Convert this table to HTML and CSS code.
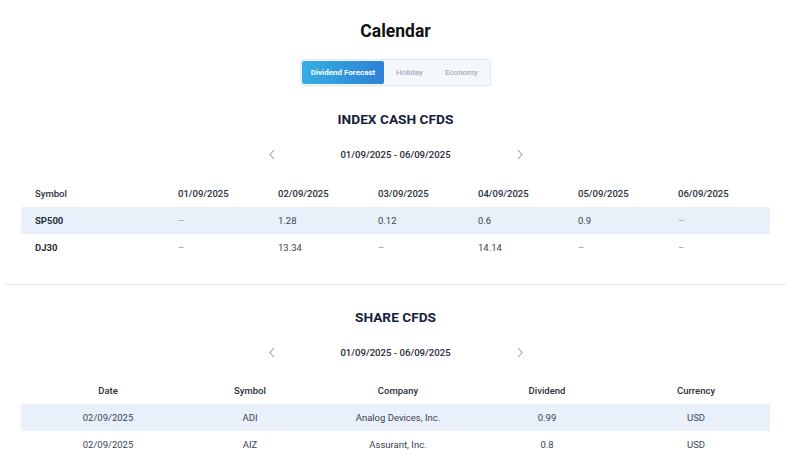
FILE: index.html
```html
<!DOCTYPE html>
<html lang="en">
<head>
<meta charset="utf-8">
<title>Calendar</title>
<link rel="stylesheet" href="styles.css">
</head>
<body>
<main class="page">
  <h1 class="title">Calendar</h1>
  <div class="tabs-wrap">
    <div class="tabs">
      <button class="tab tab-active">Dividend Forecast</button>
      <button class="tab">Holiday</button>
      <button class="tab">Economy</button>
    </div>
  </div>

  <section class="section">
    <h2 class="section-title">INDEX CASH CFDS</h2>
    <div class="nav">
      <span class="chev"><svg width="8" height="11" viewBox="0 0 8 11"><polyline points="6,1 2,5.5 6,10" fill="none" stroke="#9aa3ad" stroke-width="1.1"/></svg></span>
      <span class="range">01/09/2025 - 06/09/2025</span>
      <span class="chev"><svg width="8" height="11" viewBox="0 0 8 11"><polyline points="2,1 6,5.5 2,10" fill="none" stroke="#9aa3ad" stroke-width="1.1"/></svg></span>
    </div>
    <div class="itable">
      <div class="irow ihead">
        <div>Symbol</div><div>01/09/2025</div><div>02/09/2025</div><div>03/09/2025</div><div>04/09/2025</div><div>05/09/2025</div><div>06/09/2025</div>
      </div>
      <div class="irow shaded">
        <div class="sym">SP500</div><div class="dash">–</div><div>1.28</div><div>0.12</div><div>0.6</div><div>0.9</div><div class="dash">–</div>
      </div>
      <div class="irow">
        <div class="sym">DJ30</div><div class="dash">–</div><div>13.34</div><div class="dash">–</div><div>14.14</div><div class="dash">–</div><div class="dash">–</div>
      </div>
    </div>
  </section>

  <hr class="divider">

  <section class="section section-share">
    <h2 class="section-title">SHARE CFDS</h2>
    <div class="nav">
      <span class="chev"><svg width="8" height="11" viewBox="0 0 8 11"><polyline points="6,1 2,5.5 6,10" fill="none" stroke="#9aa3ad" stroke-width="1.1"/></svg></span>
      <span class="range">01/09/2025 - 06/09/2025</span>
      <span class="chev"><svg width="8" height="11" viewBox="0 0 8 11"><polyline points="2,1 6,5.5 2,10" fill="none" stroke="#9aa3ad" stroke-width="1.1"/></svg></span>
    </div>
    <div class="stable">
      <div class="srow shead">
        <div>Date</div><div>Symbol</div><div>Company</div><div>Dividend</div><div class="cur">Currency</div>
      </div>
      <div class="srow shaded">
        <div>02/09/2025</div><div>ADI</div><div>Analog Devices, Inc.</div><div>0.99</div><div class="cur">USD</div>
      </div>
      <div class="srow">
        <div>02/09/2025</div><div>AIZ</div><div>Assurant, Inc.</div><div>0.8</div><div class="cur">USD</div>
      </div>
    </div>
  </section>
</main>
</body>
</html>
```

FILE: styles.css
```css
* { box-sizing: border-box; }
html, body { margin: 0; padding: 0; background: #ffffff; }
body {
  font-family: Roboto, "Liberation Sans", Arial, sans-serif;
  color: #1f2a37;
  overflow: hidden;
}
.page {
  width: 791px;
  padding-top: 19px;
}
.title {
  margin: 0;
  font-size: 17.5px;
  line-height: 24px;
  font-weight: 700;
  text-align: center;
  color: #111111;
}
.tabs-wrap {
  display: flex;
  justify-content: center;
  margin-top: 16px;
}
.tabs {
  display: flex;
  align-items: center;
  height: 27px;
  padding: 1px;
  background: #f4f8fc;
  border: 1px solid #e1e9f2;
  border-radius: 3px;
  box-shadow: 0 1px 2px rgba(30, 60, 100, 0.06);
}
.tab {
  height: 23px;
  border: 0;
  background: transparent;
  font-family: inherit;
  font-size: 8px;
  font-weight: 500;
  color: #a2adb9;
  padding: 0 11px;
  cursor: pointer;
}
.tab-active {
  width: 82px;
  padding: 0;
  color: #ffffff;
  font-weight: 700;
  background: linear-gradient(90deg, #35aee3 0%, #2f80d6 100%);
  border-radius: 2px;
  margin-right: 1px;
}
.section-title {
  margin: 23px 0 0;
  font-size: 13.7px;
  line-height: 20px;
  font-weight: 700;
  text-align: center;
  color: #14213d;
}
.section-share .section-title { margin-top: 22px; }
.nav {
  margin-top: 15px;
  height: 20px;
  display: flex;
  justify-content: center;
  align-items: center;
}
.chev { display: flex; width: 8px; height: 11px; }
.range {
  width: 240px;
  text-align: center;
  font-size: 9.6px;
  font-weight: 500;
  color: #1f2a37;
}
.itable, .stable {
  margin: 16px 21px 0;
}
.stable { margin-top: 15px; }
.irow {
  display: grid;
  grid-template-columns: 143px 100px 100px 100px 100px 100px 106px;
  height: 27px;
  align-items: center;
  font-size: 9.5px;
  color: #3a4350;
}
.irow > div { padding-left: 14px; }
.ihead { font-weight: 500; color: #27303b; }
.sym { font-weight: 700; color: #27303b; }
.dash { color: #8d96a0; }
.shaded { background: #eaf0f9; }
.divider {
  margin: 23px 5px 0 5px;
  border: 0;
  height: 1px;
  background: #e6e8eb;
}
.srow {
  display: grid;
  grid-template-columns: 174px 110px 186px 112px 167px;
  height: 27px;
  align-items: center;
  font-size: 9.5px;
  color: #3a4350;
  text-align: center;
}
.srow .cur { padding-left: 19px; color: #3a4350; }
.shead { font-weight: 500; color: #27303b; }
.shead .cur { color: #27303b; }
```
